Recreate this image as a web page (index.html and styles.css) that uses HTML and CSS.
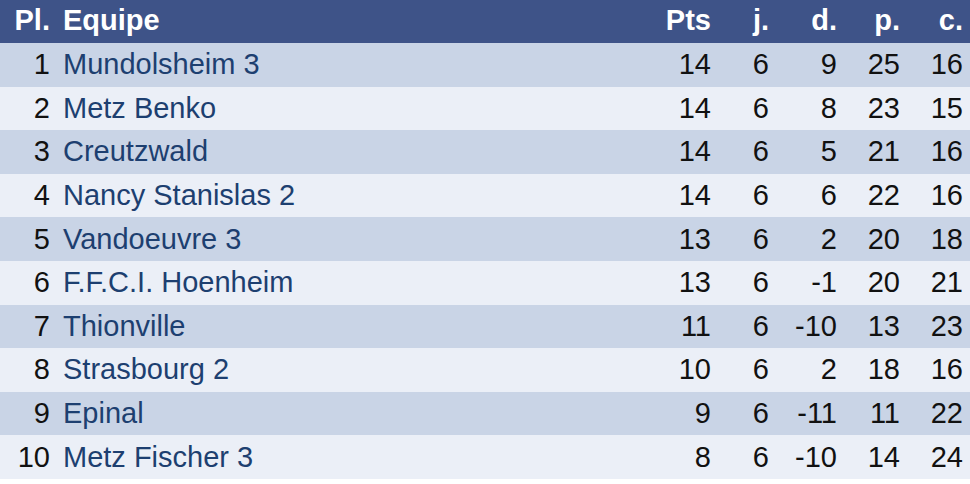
FILE: index.html
```html
<!DOCTYPE html>
<html>
<head>
<meta charset="utf-8">
<link rel="stylesheet" href="styles.css">
</head>
<body>
<table class="standings">
  <colgroup>
    <col class="c-pl"><col class="c-team"><col class="c-pts"><col class="c-j"><col class="c-d"><col class="c-p"><col class="c-c">
  </colgroup>
  <thead>
    <tr><th class="num">Pl.</th><th class="team">Equipe</th><th class="num">Pts</th><th class="num">j.</th><th class="num">d.</th><th class="num">p.</th><th class="num">c.</th></tr>
  </thead>
  <tbody>
    <tr><td class="num">1</td><td class="team"><a href="#">Mundolsheim 3</a></td><td class="num">14</td><td class="num">6</td><td class="num">9</td><td class="num">25</td><td class="num">16</td></tr>
    <tr><td class="num">2</td><td class="team"><a href="#">Metz Benko</a></td><td class="num">14</td><td class="num">6</td><td class="num">8</td><td class="num">23</td><td class="num">15</td></tr>
    <tr><td class="num">3</td><td class="team"><a href="#">Creutzwald</a></td><td class="num">14</td><td class="num">6</td><td class="num">5</td><td class="num">21</td><td class="num">16</td></tr>
    <tr><td class="num">4</td><td class="team"><a href="#">Nancy Stanislas 2</a></td><td class="num">14</td><td class="num">6</td><td class="num">6</td><td class="num">22</td><td class="num">16</td></tr>
    <tr><td class="num">5</td><td class="team"><a href="#">Vandoeuvre 3</a></td><td class="num">13</td><td class="num">6</td><td class="num">2</td><td class="num">20</td><td class="num">18</td></tr>
    <tr><td class="num">6</td><td class="team"><a href="#">F.F.C.I. Hoenheim</a></td><td class="num">13</td><td class="num">6</td><td class="num">-1</td><td class="num">20</td><td class="num">21</td></tr>
    <tr><td class="num">7</td><td class="team"><a href="#">Thionville</a></td><td class="num">11</td><td class="num">6</td><td class="num">-10</td><td class="num">13</td><td class="num">23</td></tr>
    <tr><td class="num">8</td><td class="team"><a href="#">Strasbourg 2</a></td><td class="num">10</td><td class="num">6</td><td class="num">2</td><td class="num">18</td><td class="num">16</td></tr>
    <tr><td class="num">9</td><td class="team"><a href="#">Epinal</a></td><td class="num">9</td><td class="num">6</td><td class="num">-11</td><td class="num">11</td><td class="num">22</td></tr>
    <tr><td class="num">10</td><td class="team"><a href="#">Metz Fischer 3</a></td><td class="num">8</td><td class="num">6</td><td class="num">-10</td><td class="num">14</td><td class="num">24</td></tr>
  </tbody>
</table>
</body>
</html>
```

FILE: styles.css
```css
html, body {
  margin: 0;
  padding: 0;
  background: #ffffff;
}

.standings {
  width: 970px;
  table-layout: fixed;
  border-collapse: collapse;
  font-family: "Liberation Sans", Arial, sans-serif;
  font-size: 29px;
  color: #111111;
}

.c-pl { width: 57px; }
.c-pts { width: 70px; }
.c-j { width: 58px; }
.c-d { width: 68px; }
.c-p { width: 63px; }
.c-c { width: 63px; }

.standings th,
.standings td {
  padding: 0 7px 0 6px;
  white-space: nowrap;
  overflow: hidden;
  vertical-align: middle;
}

.standings thead tr {
  height: 43px;
  background: #3e5388;
}

.standings th {
  color: #ffffff;
  font-weight: bold;
  padding-bottom: 2px;
}

.standings tbody tr {
  height: 43.6px;
}

.standings tbody tr:nth-child(odd) {
  background: #c9d4e6;
}

.standings tbody tr:nth-child(even) {
  background: #ebeff7;
}

.num { text-align: right; }
.team { text-align: left; }

.standings a {
  color: #1d3f70;
  text-decoration: none;
}
```
